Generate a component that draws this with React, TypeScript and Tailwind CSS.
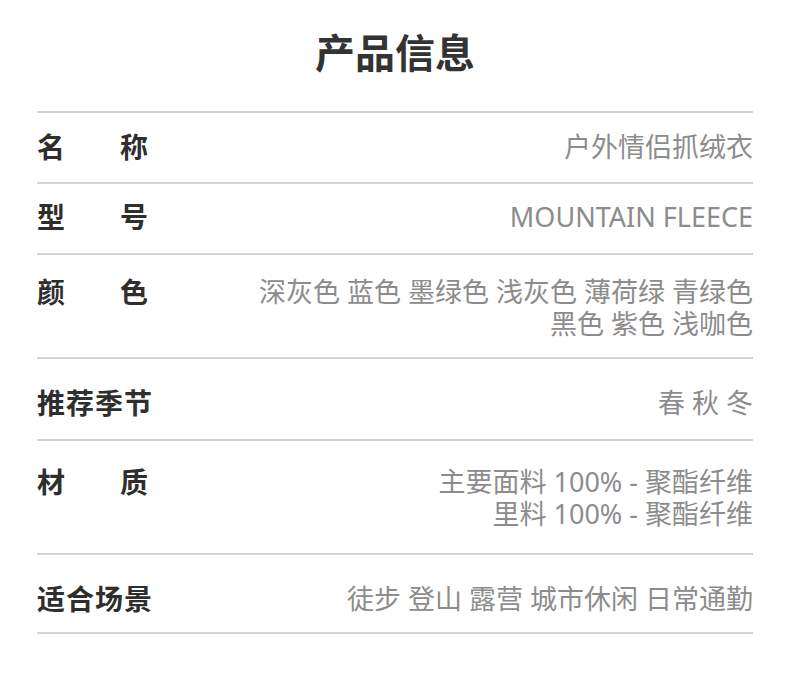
const ROWS = [
  { label: ["名", "称"], lines: ["户外情侣抓绒衣"], pad: "pt-[18px] pb-[19px]" },
  { label: ["型", "号"], lines: ["MOUNTAIN FLEECE"], pad: "pt-[17px] pb-[20px]" },
  {
    label: ["颜", "色"],
    lines: ["深灰色 蓝色 墨绿色 浅灰色 薄荷绿 青绿色", "黑色 紫色 浅咖色"],
    pad: "pt-[21px] pb-[17px]",
  },
  { label: ["推荐季节"], lines: ["春 秋 冬"], pad: "pt-[28px] pb-[20px]" },
  {
    label: ["材", "质"],
    lines: ["主要面料 100% - 聚酯纤维", "里料 100% - 聚酯纤维"],
    pad: "pt-[25px] pb-[23px]",
  },
  { label: ["适合场景"], lines: ["徒步 登山 露营 城市休闲 日常通勤"], pad: "pt-[28px] pb-[17px]" },
];

export default function App() {
  return (
    <div
      className="w-[790px] h-[677px] bg-white"
      style={{ fontFamily: '"Noto Sans", "Noto Sans CJK SC", sans-serif' }}
    >
      <h1 className="pt-[28px] pb-[33px] text-center text-[40px] leading-[50px] font-bold text-[#333333]">
        产品信息
      </h1>

      <div className="mx-[37px] border-t-2 border-[#d4d4d4]">
        {ROWS.map((row) => (
          <div
            key={row.lines[0]}
            className={`flex justify-between items-start border-b-2 border-[#d4d4d4] ${row.pad}`}
          >
            <div className="flex text-[28px] leading-[32px] font-bold text-[#2e2e2e] shrink-0">
              {row.label.length === 2 ? (
                <>
                  <span className="w-[83px]">{row.label[0]}</span>
                  <span>{row.label[1]}</span>
                </>
              ) : (
                <span className="tracking-[1px]">{row.label[0]}</span>
              )}
            </div>
            <div className="text-right text-[27px] leading-[32px] text-[#8c8c8c]">
              {row.lines.map((line) => (
                <p key={line} className="whitespace-pre">
                  {line}
                </p>
              ))}
            </div>
          </div>
        ))}
      </div>
    </div>
  );
}
